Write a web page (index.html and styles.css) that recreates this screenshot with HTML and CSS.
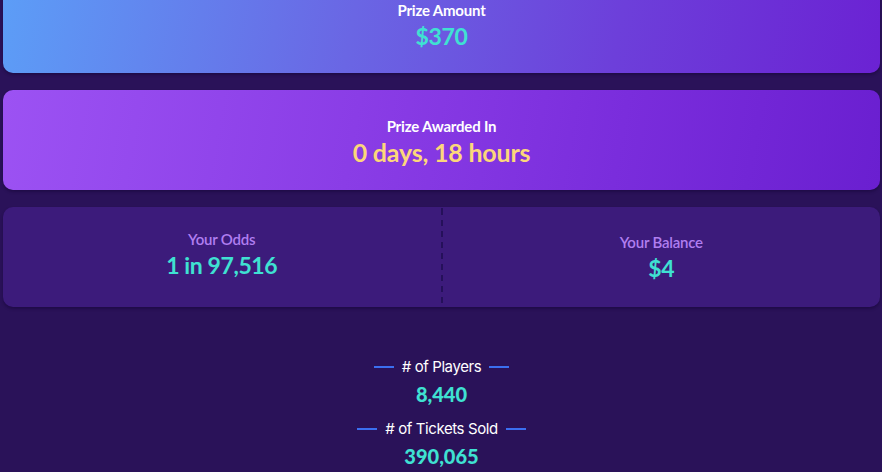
FILE: index.html
```html
<!DOCTYPE html>
<html>
<head>
<meta charset="utf-8">
<link rel="stylesheet" href="styles.css">
</head>
<body>
<main class="page">
  <section class="card card-prize">
    <div class="label">Prize Amount</div>
    <div class="value teal">$370</div>
  </section>
  <section class="card card-awarded">
    <div class="label">Prize Awarded In</div>
    <div class="value value-lg gold">0 days, 18 hours</div>
  </section>
  <section class="card card-split">
    <div class="half half-left">
      <div class="label lilac">Your Odds</div>
      <div class="value teal">1 in 97,516</div>
    </div>
    <div class="divider"></div>
    <div class="half half-right">
      <div class="label lilac">Your Balance</div>
      <div class="value teal">$4</div>
    </div>
  </section>
  <section class="stats">
    <div class="stat-label"><span class="line"></span><span># of Players</span><span class="line"></span></div>
    <div class="stat-value">8,440</div>
    <div class="stat-label"><span class="line"></span><span># of Tickets Sold</span><span class="line"></span></div>
    <div class="stat-value">390,065</div>
  </section>
</main>
</body>
</html>
```
FILE: styles.css
```css
html, body {
  margin: 0;
  padding: 0;
  background: #2a1259;
  font-family: Lato, "Open Sans", sans-serif;
  overflow: hidden;
}
.page {
  display: flex;
  flex-direction: column;
  gap: 17px;
  padding: 0 2px 0 3px;
  margin-top: -27px;
}
.card {
  height: 100px;
  box-sizing: border-box;
  padding-top: 3px;
  border-radius: 10px;
  display: flex;
  flex-direction: column;
  align-items: center;
  justify-content: center;
  box-shadow: 0 2px 3px rgba(20, 5, 50, 0.45);
}
.card-prize {
  background: linear-gradient(100deg, #5c9ef7 0%, #6a66e4 40%, #6d3fda 70%, #6b22d3 100%);
  padding-top: 4px;
}
.card-awarded {
  background: linear-gradient(100deg, #9c52f3 0%, #8a3de6 40%, #7a2ddc 70%, #6a1fd0 100%);
}
.card-split {
  background: #3c1b7b;
  flex-direction: row;
  align-items: stretch;
  padding-top: 0;
}
.half {
  flex: 1;
  display: flex;
  flex-direction: column;
  align-items: center;
  justify-content: center;
}
.half-left { padding-bottom: 6px; }
.divider {
  width: 2px;
  background: repeating-linear-gradient(to bottom, #25105a 0 6px, transparent 6px 11px);
  background-position: 0 2px;
}
.label {
  color: #ffffff;
  font-weight: 700;
  font-size: 15px;
  line-height: 18px;
  letter-spacing: -0.2px;
}
.value {
  font-weight: 700;
  font-size: 23px;
  line-height: 28px;
  margin-top: 3px;
  letter-spacing: -0.4px;
}
.value-lg {
  font-size: 25px;
  letter-spacing: -0.2px;
}
.teal { color: #3fe1d2; }
.gold { color: #fcd77a; }
.lilac { color: #b07ef0; font-weight: 600; font-size: 15px; }
.stats {
  display: flex;
  flex-direction: column;
  align-items: center;
  padding-top: 33px;
  font-family: Inter, sans-serif;
}
.stat-label {
  display: flex;
  align-items: center;
  gap: 8px;
  color: #ffffff;
  font-size: 15px;
  line-height: 20px;
  letter-spacing: -0.4px;
}
.line {
  width: 20px;
  height: 2px;
  background: #3b6ff0;
}
.stat-value {
  color: #3fe1d2;
  font-family: Lato, sans-serif;
  font-weight: 900;
  font-size: 20px;
  line-height: 24px;
  margin-top: 5px;
  margin-bottom: 13px;
}
```
